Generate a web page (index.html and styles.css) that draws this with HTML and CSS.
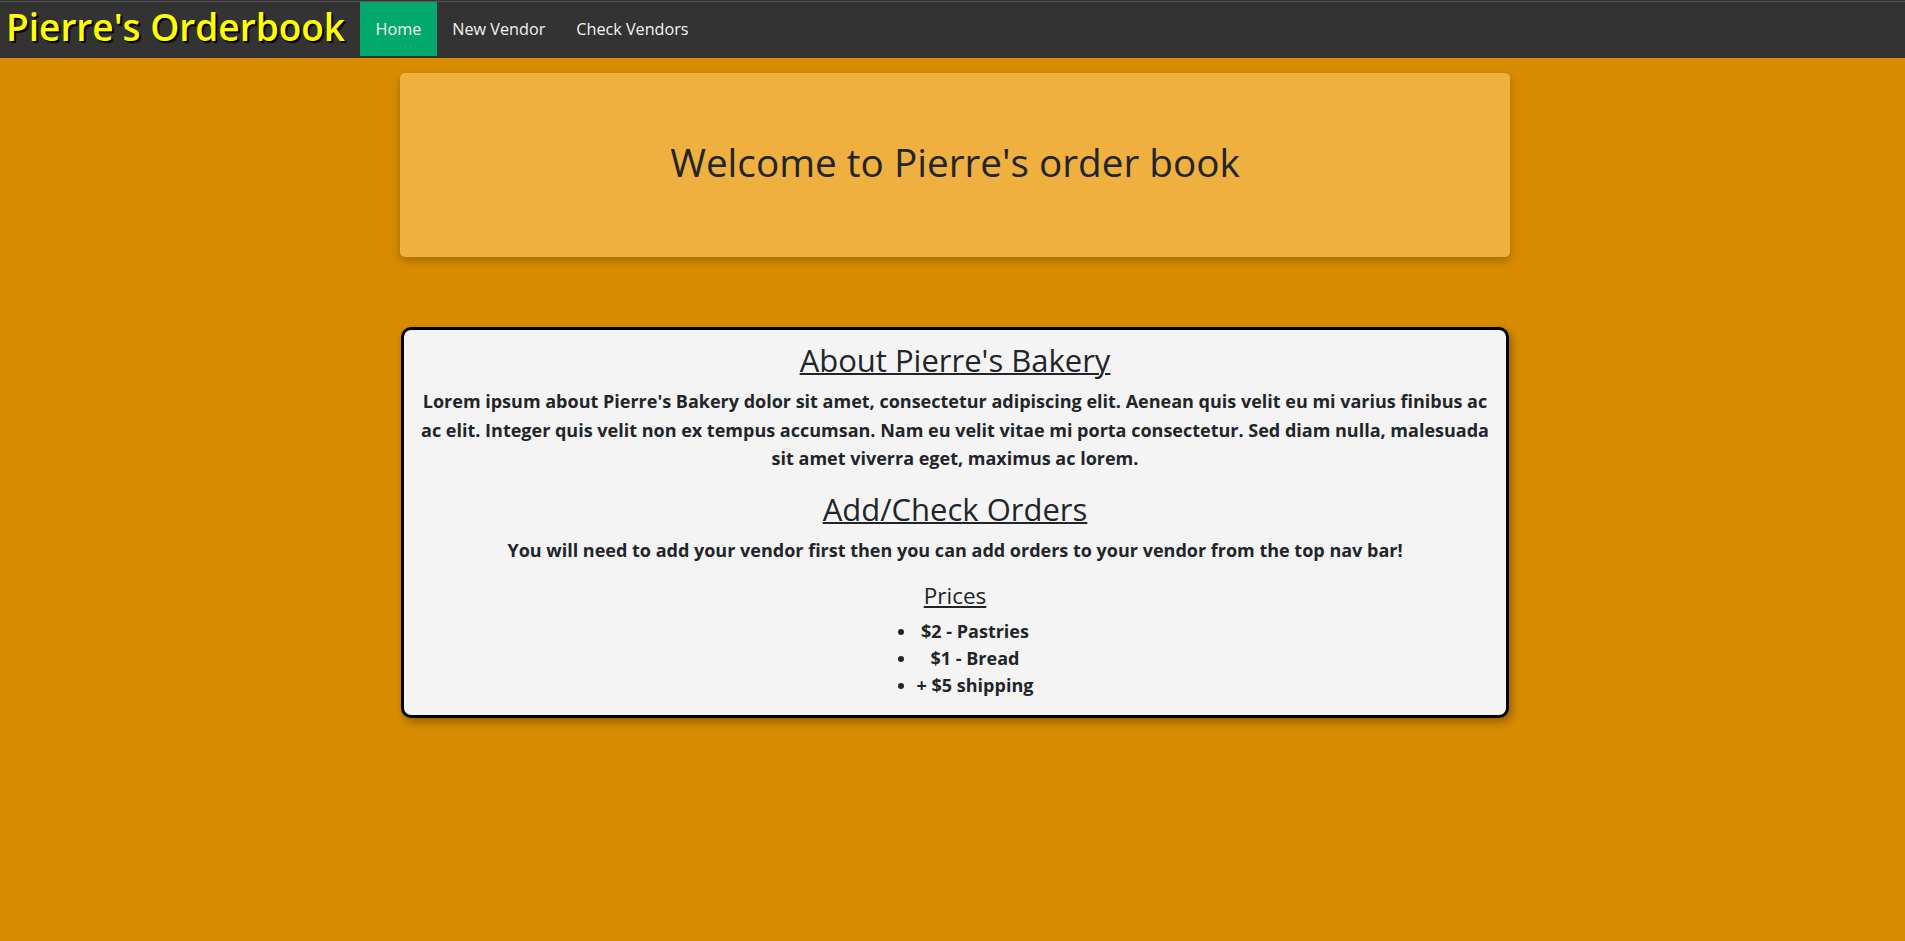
FILE: index.html
```html
<!DOCTYPE html>
<html lang="en">
<head>
<meta charset="utf-8">
<title>Pierre's Orderbook</title>
<link rel="stylesheet" href="styles.css">
</head>
<body>
<nav class="navbar">
  <a class="brand" href="#">Pierre's Orderbook</a>
  <ul class="nav-links">
    <li><a class="nav-link active" href="#">Home</a></li>
    <li><a class="nav-link" href="#">New Vendor</a></li>
    <li><a class="nav-link" href="#">Check Vendors</a></li>
  </ul>
</nav>
<div class="page">
  <main class="container">
    <div class="jumbotron">
      <h1 class="welcome">Welcome to Pierre's order book</h1>
    </div>
    <section class="about-box">
      <h2 class="section-title">About Pierre's Bakery</h2>
      <p class="body-text">Lorem ipsum about Pierre's Bakery dolor sit amet, consectetur adipiscing elit. Aenean quis velit eu mi varius finibus ac ac elit. Integer quis velit non ex tempus accumsan. Nam eu velit vitae mi porta consectetur. Sed diam nulla, malesuada sit amet viverra eget, maximus ac lorem.</p>
      <h2 class="section-title">Add/Check Orders</h2>
      <p class="body-text">You will need to add your vendor first then you can add orders to your vendor from the top nav bar!</p>
      <h4 class="prices-title">Prices</h4>
      <div class="price-wrap">
        <ul class="price-list">
          <li>$2 - Pastries</li>
          <li>$1 - Bread</li>
          <li>+ $5 shipping</li>
        </ul>
      </div>
    </section>
  </main>
</div>
</body>
</html>
```
FILE: styles.css
```css
html, body {
  margin: 0;
  padding: 0;
}
body {
  background: #d68b00;
  font-family: "Open Sans", "Noto Sans", "Liberation Sans", sans-serif;
  color: #212529;
  min-height: 941px;
}
.navbar {
  display: flex;
  align-items: stretch;
  height: 58px;
  box-sizing: border-box;
  padding-top: 2px;
  padding-bottom: 2px;
  background: linear-gradient(to bottom, #333 0, #333 1px, #565656 1px, #565656 2px, #333 2px);
}
.brand {
  align-self: center;
  margin: 0 15px 0 6px;
  padding-bottom: 4px;
  font-size: 37px;
  font-weight: 600;
  line-height: 1.2;
  color: #ffff00;
  text-decoration: none;
  text-shadow: 2px 2px 1px #000;
  white-space: nowrap;
}
.nav-links {
  display: flex;
  list-style: none;
  margin: 0;
  padding: 0;
}
.nav-link {
  display: block;
  height: 54px;
  line-height: 54px;
  padding: 0 15.5px;
  font-size: 16.2px;
  color: #f4f4f4;
  text-decoration: none;
}
.nav-link.active {
  background: #03a86c;
  color: #f2f2f2;
}
.page {
  display: flex;
  justify-content: center;
  padding-left: 5px;
}
.container {
  width: 1110px;
  padding-top: 15px;
}
.jumbotron {
  background: #f0b040;
  border-radius: 5px;
  padding: 65px 32px 63px;
  box-shadow: 0 4px 8px rgba(0, 0, 0, 0.22);
  text-align: center;
}
.welcome {
  margin: 0 0 8px;
  font-size: 38.7px;
  font-weight: 400;
  line-height: 48px;
  color: #212529;
}
.about-box {
  margin: 70px 1px 0;
  background: #f4f4f4;
  border: 3px solid #000;
  border-radius: 10px;
  padding: 11px 15px 16px;
  box-shadow: 3px 4px 8px rgba(0, 0, 0, 0.3);
  text-align: center;
}
.section-title {
  margin: 0 0 8px;
  font-size: 31px;
  font-weight: 400;
  line-height: 38px;
  text-decoration: underline;
  text-decoration-thickness: 2px;
}
.body-text {
  margin: 0 0 17px;
  font-size: 18px;
  font-weight: 700;
  line-height: 28.7px;
}
.prices-title {
  margin: 0 0 7px;
  font-size: 22.5px;
  font-weight: 400;
  line-height: 28.8px;
  text-decoration: underline;
}
.price-list {
  display: inline-block;
  margin: 0;
  padding-left: 40px;
  list-style: disc outside;
}
.price-list li {
  font-size: 18px;
  font-weight: 700;
  line-height: 27px;
  text-align: center;
}
```
